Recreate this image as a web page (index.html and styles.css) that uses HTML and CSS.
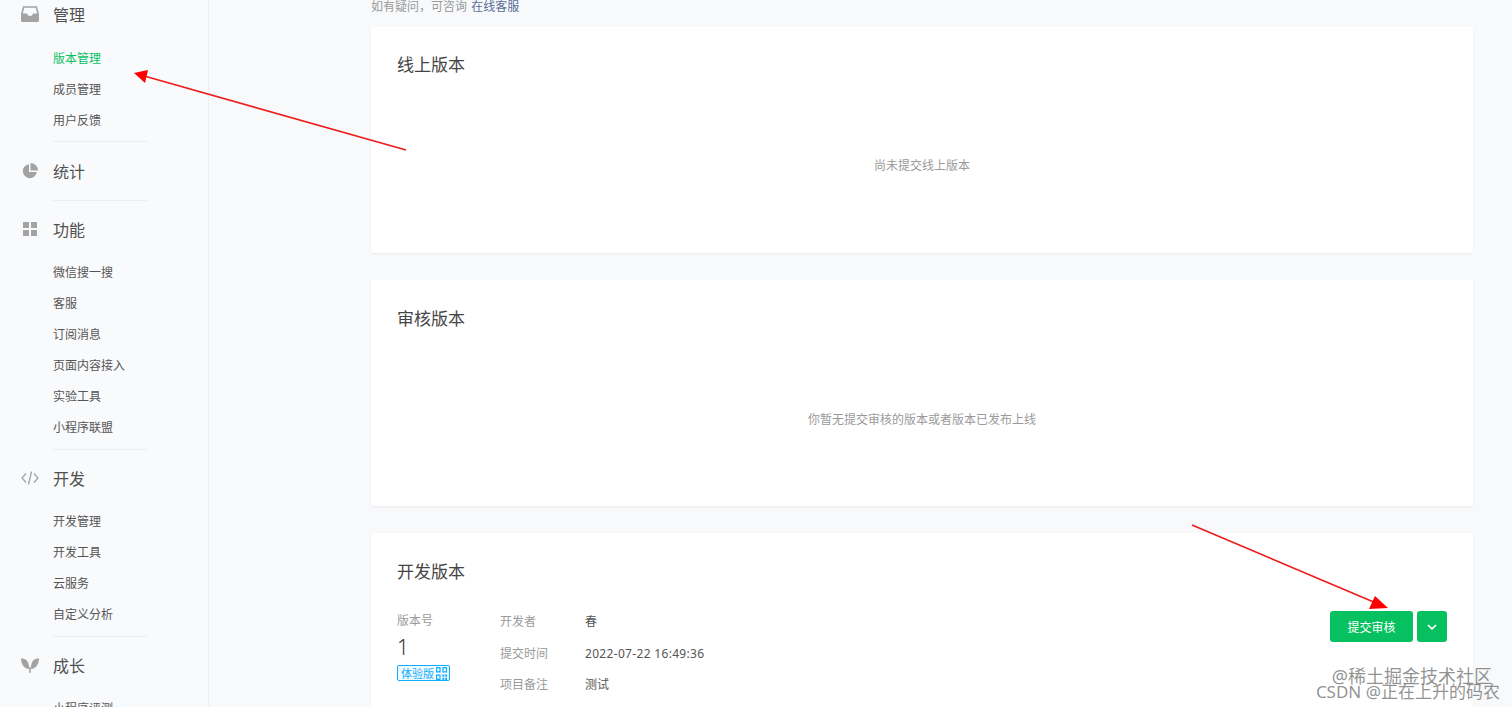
FILE: index.html
```html
<!DOCTYPE html>
<html lang="zh-CN">
<head>
<meta charset="utf-8">
<title>版本管理</title>
<link rel="stylesheet" href="styles.css">
</head>
<body>
<div class="page">
  <aside class="sidebar">
    <section class="group group-first">
      <div class="head">
        <svg class="icon" viewBox="0 0 16 14"><path d="M2.600 0h10.800a1 1 0 0 1 1 .8L16 7v6a1 1 0 0 1-1 1H1a1 1 0 0 1-1-1V7L1.600.8a1 1 0 0 1 1-.8zM2.800 1.500 1.700 6.500H5.500a2.500 2.200 0 0 0 5 0h3.800l-1.100-5z" fill-rule="evenodd"/></svg>
        <span>管理</span>
      </div>
      <ul class="items">
        <li class="active">版本管理</li>
        <li>成员管理</li>
        <li>用户反馈</li>
      </ul>
    </section>
    <section class="group group-solo">
      <div class="head">
        <svg class="icon" viewBox="0 0 16 16"><path d="M7 1.200V9h7.800A7 7 0 1 1 7 1.200z"/><path d="M8.500 0A7.500 7.500 0 0 1 16 7.500H8.500z"/></svg>
        <span>统计</span>
      </div>
    </section>
    <section class="group">
      <div class="head">
        <svg class="icon" viewBox="0 0 16 16"><rect x="1" y="1" width="6" height="6"/><rect x="9" y="1" width="6" height="6"/><rect x="1" y="9" width="6" height="6"/><rect x="9" y="9" width="6" height="6"/></svg>
        <span>功能</span>
      </div>
      <ul class="items">
        <li>微信搜一搜</li>
        <li>客服</li>
        <li>订阅消息</li>
        <li>页面内容接入</li>
        <li>实验工具</li>
        <li>小程序联盟</li>
      </ul>
    </section>
    <section class="group">
      <div class="head">
        <svg class="icon" viewBox="0 0 18 16"><path d="M5 3.500 1 8l4 4.500M13 3.500 17 8l-4 4.500M10.500 1.500 7.500 14.500" fill="none" stroke="#a3a3a3" stroke-width="1.300"/></svg>
        <span>开发</span>
      </div>
      <ul class="items">
        <li>开发管理</li>
        <li>开发工具</li>
        <li>云服务</li>
        <li>自定义分析</li>
      </ul>
    </section>
    <section class="group">
      <div class="head">
        <svg class="icon" viewBox="0 0 16 14"><path d="M7.300 10.500C2.500 10.500 0 6 0 1c4.500 0 7.300 3 7.300 9.500z"/><path d="M8.700 10.500C13.500 10.500 16 6 16 1c-4.500 0-7.300 3-7.300 9.500z"/><rect x="7.300" y="9" width="1.400" height="5"/></svg>
        <span>成长</span>
      </div>
      <ul class="items">
        <li>小程序评测</li>
      </ul>
    </section>
  </aside>

  <main class="main">
    <p class="note">如有疑问，可咨询 <a class="link">在线客服</a></p>

    <section class="card">
      <h2 class="title">线上版本</h2>
      <div class="empty">尚未提交线上版本</div>
    </section>

    <section class="card">
      <h2 class="title">审核版本</h2>
      <div class="empty">你暂无提交审核的版本或者版本已发布上线</div>
    </section>

    <section class="card card-dev">
      <h2 class="title">开发版本</h2>
      <div class="dev-row">
        <div class="version">
          <div class="label">版本号</div>
          <div class="number">1</div>
          <div class="tag">
            <span>体验版</span>
            <svg class="qr" viewBox="0 0 12 14" preserveAspectRatio="none"><path d="M0 0h5v6H0zM1.300 1.300v3.400h2.400V1.300zM7 0h5v6H7zM8.300 1.300v3.400h2.400V1.300zM0 8h5v6H0zM1.300 9.300v3.400h2.400V9.300zM7 8h2v2.500H7zM10 8h2v2.500h-2zM7 11.500h2V14H7zM10 11.500h2V14h-2z" fill-rule="evenodd"/></svg>
          </div>
        </div>
        <dl class="info">
          <dt class="label">开发者</dt><dd>春</dd>
          <dt class="label">提交时间</dt><dd class="date">2022-07-22 16:49:36</dd>
          <dt class="label">项目备注</dt><dd>测试</dd>
        </dl>
        <div class="actions">
          <button class="btn">提交审核</button>
          <button class="btn btn-more" aria-label="更多">
            <svg viewBox="0 0 10 6" class="chev"><path d="M1 1l4 3.800L9 1" fill="none" stroke="#fff" stroke-width="1.600"/></svg>
          </button>
        </div>
      </div>
    </section>
  </main>

  <svg class="arrows" viewBox="0 0 1512 707">
    <path d="M406 150 146 76.500M1192 525 1376 603" fill="none" stroke="#ee1c1c" stroke-width="1.700"/>
    <path d="M134 73 148 70 145 83z" fill="#ff0000"/>
    <path d="M1388 608 1375 596 1369 609z" fill="#ff0000"/>
  </svg>

  <div class="watermark">
    <div class="mark-top">@稀土掘金技术社区</div>
    <div class="mark-bottom">CSDN @正在上升的码农</div>
  </div>
</div>
</body>
</html>
```
FILE: styles.css
```css
* { box-sizing: border-box; }
html, body { margin: 0; height: 100%; overflow: hidden; }
body {
  font-family: "Noto Sans", "Noto Sans CJK SC", sans-serif;
  font-size: 12px;
  color: #3f3f3f;
  background: #f7f9fb;
}
.page { position: relative; display: flex; width: 1512px; height: 707px; overflow: hidden; }

.sidebar {
  flex: none;
  width: 209px;
  height: 760px;
  margin-top: -1px;
  background: #f9fafc;
  border-right: 1px solid #eff0f2;
}
.group { padding-bottom: 13px; }
.group + .group { padding-top: 14px; position: relative; }
.group + .group::before {
  content: "";
  position: absolute;
  top: 0;
  left: 53px;
  width: 95px;
  height: 1px;
  background: #eceef0;
}
.group-solo { padding-bottom: 14px; }
.group-solo.group { padding-top: 15px; }
.head {
  display: flex;
  align-items: center;
  height: 30px;
  padding-left: 21px;
  font-size: 16px;
  color: #505050;
}
.head .icon { width: 18px; height: 16px; margin-right: 14px; fill: #a3a3a3; }
.items { list-style: none; margin: 13px 0 -7px; padding: 0 0 0 53px; }
.group-first .items { margin: 14px 0 -8px; }
.items li { height: 31px; line-height: 31px; color: #555; }
.items li.active { color: #07c160; }

.main { flex: 1; padding: 0 39px 0 162px; }
.note { margin: 0; height: 27px; line-height: 13px; color: #9a9a9a; }
.link { margin-left: 1px; color: #576b95; }
.card {
  display: flex;
  flex-direction: column;
  height: 226px;
  margin-bottom: 27px;
  padding: 26px 26px 0;
  background: #fff;
  box-shadow: 0 1px 2px rgba(0, 0, 0, .06);
}
.card + .card { padding-top: 27px; }
.title { margin: 0; font-size: 17px; font-weight: 400; line-height: 24px; color: #454545; }
.empty {
  flex: 1;
  display: flex;
  align-items: center;
  justify-content: center;
  color: #9a9a9a;
}
.card-dev { height: 260px; }
.dev-row { display: flex; margin-top: 28px; }
.label { color: #9a9a9a; }
.version { flex: none; width: 103px; }
.version .label { line-height: 18px; }
.number { margin-top: 3px; font-size: 21px; font-weight: 300; line-height: 28px; color: #353535; }
.tag {
  display: flex;
  align-items: center;
  justify-content: space-between;
  width: 53px;
  height: 16px;
  margin-top: 4px;
  padding: 0 2px 0 3px;
  font-size: 11px;
  color: #10aeff;
  background: #f0faff;
  border: 1px solid #10aeff;
  border-radius: 2px;
}
.qr { width: 11px; height: 13px; fill: #10aeff; }
.info {
  flex: 1;
  display: grid;
  grid-template-columns: 85px 1fr;
  grid-auto-rows: 31.5px;
  margin: -6px 0 0;
  line-height: 31.5px;
}
.info dd { margin: 0; color: #555; }
.info .date { letter-spacing: .32px; }
.actions { display: flex; gap: 4px; margin-top: -1px; }
.btn {
  height: 31px;
  width: 83px;
  padding: 0;
  font: inherit;
  color: #fff;
  background: #07c160;
  border: 0;
  border-radius: 3px;
}
.btn-more { display: flex; align-items: center; justify-content: center; width: 30px; }
.chev { width: 10px; height: 6px; }

.arrows { position: absolute; inset: 0; width: 1512px; height: 707px; pointer-events: none; }
.watermark {
  position: absolute;
  right: 12px;
  top: 668px;
  color: rgba(110, 110, 110, .75);
  text-align: right;
  white-space: nowrap;
}
.mark-top { padding-right: 8px; font-size: 18px; line-height: 16px; }
.mark-bottom { font-size: 17px; line-height: 15px; }
```
